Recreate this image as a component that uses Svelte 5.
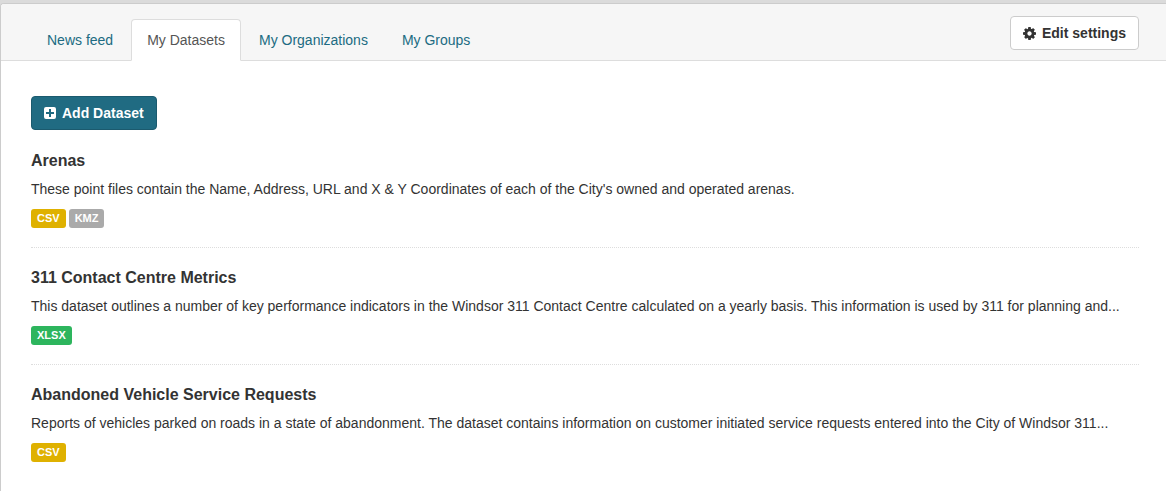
<script>
  const tabs = [
    { label: 'News feed' },
    { label: 'My Datasets', active: true },
    { label: 'My Organizations' },
    { label: 'My Groups' },
  ];

  const datasets = [
    {
      title: 'Arenas',
      notes: "These point files contain the Name, Address, URL and X & Y Coordinates of each of the City's owned and operated arenas.",
      formats: ['CSV', 'KMZ'],
    },
    {
      title: '311 Contact Centre Metrics',
      notes: 'This dataset outlines a number of key performance indicators in the Windsor 311 Contact Centre calculated on a yearly basis. This information is used by 311 for planning and...',
      formats: ['XLSX'],
    },
    {
      title: 'Abandoned Vehicle Service Requests',
      notes: 'Reports of vehicles parked on roads in a state of abandonment. The dataset contains information on customer initiated service requests entered into the City of Windsor 311...',
      formats: ['CSV'],
    },
  ];
</script>

<div class="page">
  <main class="panel">
    <header class="page-header">
      <nav class="tabs">
        {#each tabs as tab}
          <a href="#top" class="tab" class:active={tab.active} aria-current={tab.active ? 'page' : undefined}>{tab.label}</a>
        {/each}
      </nav>
      <a href="#settings" class="btn btn-default">
        <svg width="13" height="13" viewBox="0 0 1536 1536" aria-hidden="true">
          <path fill="currentColor" fill-rule="evenodd" d="M1024 768q0-106-75-181t-181-75-181 75-75 181 75 181 181 75 181-75 75-181zm512-109v222q0 12-8 23t-20 13l-185 28q-19 54-39 91 35 50 107 138 10 12 10 25t-9 23q-27 37-99 108t-94 71q-12 0-26-9l-138-108q-44 23-91 38-16 136-29 186-7 28-36 28H657q-14 0-24.500-8.500T621 1506l-28-184q-49-16-90-37l-141 107q-10 9-25 9-14 0-25-11-126-114-165-168-7-10-7-23 0-12 8-23 15-21 51-66.500t54-70.500q-27-50-41-99L29 913q-13-2-21-12.500T0 877V655q0-12 8-23t19-13l186-28q14-46 39-92-40-57-107-138-10-12-10-24 0-10 9-23 26-36 98.500-107.500T337 135q13 0 26 10l138 107q44-23 91-38 16-136 29-186 7-28 36-28h222q14 0 24.500 8.500T915 30l28 184q49 16 90 37l142-107q9-9 24-9 13 0 25 10 129 119 165 170 7 8 7 22 0 12-8 23-15 21-51 66.500t-54 70.500q26 50 41 98l183 28q13 2 21 12.500t8 23.500z" />
        </svg>
        Edit settings
      </a>
    </header>

    <section class="content">
      <div class="actions">
        <a href="#new" class="btn btn-primary">
          <svg width="12" height="12" viewBox="0 0 12 12" aria-hidden="true">
            <path fill="currentColor" fill-rule="evenodd" d="M2 0h8a2 2 0 0 1 2 2v8a2 2 0 0 1-2 2H2a2 2 0 0 1-2-2V2a2 2 0 0 1 2-2zM5 2v3H2v2h3v3h2V7h3V5H7V2z" />
          </svg>
          Add Dataset
        </a>
      </div>

      <ul class="datasets">
        {#each datasets as dataset}
          <li class="dataset">
            <h3>{dataset.title}</h3>
            <p>{dataset.notes}</p>
            <ul class="formats">
              {#each dataset.formats as format}
                <li class="label {format.toLowerCase()}">{format}</li>
              {/each}
            </ul>
          </li>
        {/each}
      </ul>
    </section>
  </main>
</div>

<style>
  :global(body) {
    background: #fff;
  }

  .page {
    min-height: 100vh;
    box-sizing: border-box;
    padding-top: 3px;
    display: flex;
    background: #dbdbdb;
    color: #333;
    font: 14px/20px "Liberation Sans", Arial, sans-serif;
  }

  .panel {
    flex: 1;
    min-width: 0;
    border: solid #ccc;
    border-width: 1px 0 0 1px;
    border-top-left-radius: 4px;
    background: #fff;
    overflow: hidden;
  }

  .page-header {
    display: flex;
    justify-content: space-between;
    align-items: flex-start;
    padding: 12px 27px 0 30px;
    border-bottom: 1px solid #ddd;
    background: #f6f6f6;
  }

  .tabs {
    display: flex;
    gap: 2px;
    margin: 3px 0 -1px;
  }

  .tab {
    padding: 10px 15px;
    border: 1px solid transparent;
    border-radius: 4px 4px 0 0;
    color: #206b82;
    text-decoration: none;
  }

  .tab.active {
    border-color: #ddd #ddd #fff;
    background: #fff;
    color: #555;
  }

  .btn {
    display: inline-flex;
    align-items: center;
    gap: 6px;
    padding: 6px 12px;
    border: 1px solid;
    border-radius: 4px;
    font-weight: bold;
    white-space: nowrap;
    text-decoration: none;
  }

  .btn-default {
    border-color: #ccc;
    background: #fff;
    color: #333;
  }

  .btn-primary {
    border-color: #1b5a6e;
    background: #206b82;
    color: #fff;
  }

  .content {
    padding: 35px 27px 8px 30px;
  }

  .actions {
    display: flex;
    margin-bottom: 1px;
  }

  ul {
    margin: 0;
    padding: 0;
    list-style: none;
  }

  .dataset {
    padding: 20px 0 19px;
    border-bottom: 1px dotted #ddd;
  }

  .dataset:last-child {
    border-bottom: 0;
  }

  h3 {
    margin: 0 0 8px;
    font-size: 16px;
    line-height: 20px;
  }

  p {
    margin: 0 0 10px;
  }

  .formats {
    display: flex;
    gap: 3px;
  }

  .label {
    padding: 0 6px;
    border-radius: 3px;
    background: #aaa;
    color: #fff;
    font-size: 11px;
    font-weight: bold;
    line-height: 19px;
  }

  .csv {
    background: #dfb100;
  }

  .xlsx {
    background: #2db55d;
  }
</style>
